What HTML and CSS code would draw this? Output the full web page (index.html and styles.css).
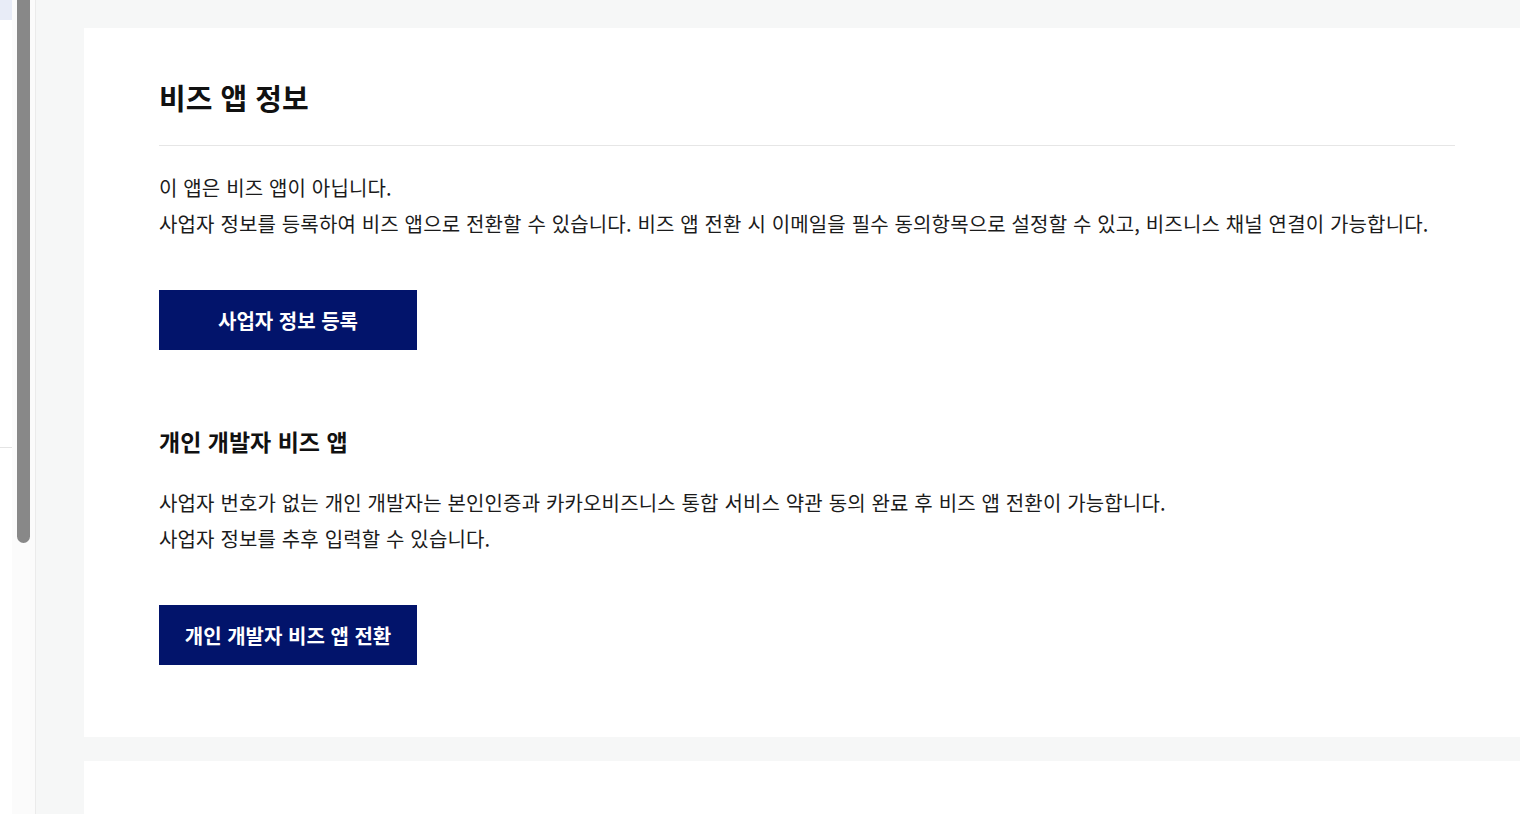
FILE: index.html
```html
<!DOCTYPE html>
<html lang="ko">
<head>
<meta charset="utf-8">
<title>비즈 앱 정보</title>
<link rel="stylesheet" href="styles.css">
</head>
<body>
<div class="layout">
  <aside class="sidebar">
    <div class="side-content">
      <div class="side-active"></div>
      <div class="side-line"></div>
    </div>
    <div class="side-track"><div class="side-thumb"></div></div>
  </aside>
  <main class="main">
    <section class="card">
      <h2 class="title">비즈 앱 정보</h2>
      <hr class="divider">
      <p class="desc">이 앱은 비즈 앱이 아닙니다.<br>사업자 정보를 등록하여 비즈 앱으로 전환할 수 있습니다. 비즈 앱 전환 시 이메일을 필수 동의항목으로 설정할 수 있고, 비즈니스 채널 연결이 가능합니다.</p>
      <button class="btn" type="button">사업자 정보 등록</button>
      <h3 class="subtitle">개인 개발자 비즈 앱</h3>
      <p class="desc desc-sub">사업자 번호가 없는 개인 개발자는 본인인증과 카카오비즈니스 통합 서비스 약관 동의 완료 후 비즈 앱 전환이 가능합니다.<br>사업자 정보를 추후 입력할 수 있습니다.</p>
      <button class="btn" type="button">개인 개발자 비즈 앱 전환</button>
    </section>
    <section class="card card-next"></section>
  </main>
</div>
</body>
</html>
```
FILE: styles.css
```css
html, body {
  margin: 0;
  padding: 0;
  height: 100%;
  overflow: hidden;
}
body {
  font-family: "Noto Sans CJK KR", "Noto Sans", sans-serif;
  color: #1b1b1b;
  background: #f6f7f7;
}
.layout {
  display: flex;
  height: 814px;
}
.sidebar {
  width: 35px;
  flex: none;
  display: flex;
  border-right: 1px solid #ebebeb;
  background: #fbfbfb;
}
.side-content {
  width: 12px;
  background: #ffffff;
  display: flex;
  flex-direction: column;
}
.side-active {
  height: 20px;
  background: #e8ecf7;
}
.side-line {
  margin-top: 427px;
  height: 1px;
  background: #e4e4e4;
}
.side-track {
  flex: 1;
  padding: 0 5px 0 5px;
}
.side-thumb {
  height: 543px;
  background: #888888;
  border-radius: 0 0 7px 7px;
}
.main {
  flex: 1;
  padding: 28px 0 0 48px;
  display: flex;
  flex-direction: column;
  gap: 24px;
  min-width: 0;
}
.card {
  background: #ffffff;
  padding: 49px 65px 72px 75px;
}
.card-next {
  flex: 1;
  padding: 0;
}
.title {
  margin: 0;
  font-size: 29px;
  line-height: 40px;
  font-weight: 600;
  color: #111111;
}
.divider {
  margin: 28px 0 0 0;
  border: 0;
  height: 1px;
  background: #e6e6e6;
}
.desc {
  margin: 24px 0 0 0;
  font-size: 20px;
  line-height: 36px;
  letter-spacing: 0.15px;
  color: #1b1b1b;
}
.desc-sub {
  margin-top: 28px;
}
.btn {
  display: block;
  margin-top: 48px;
  width: 258px;
  height: 60px;
  border: 0;
  border-radius: 0;
  background: #02146b;
  color: #ffffff;
  font-family: "Noto Sans CJK KR", "Noto Sans", sans-serif;
  font-size: 20px;
  font-weight: 700;
  padding: 0;
  cursor: pointer;
}
.subtitle {
  margin: 75px 0 0 0;
  font-size: 23px;
  line-height: 32px;
  font-weight: 600;
  color: #111111;
}
```
